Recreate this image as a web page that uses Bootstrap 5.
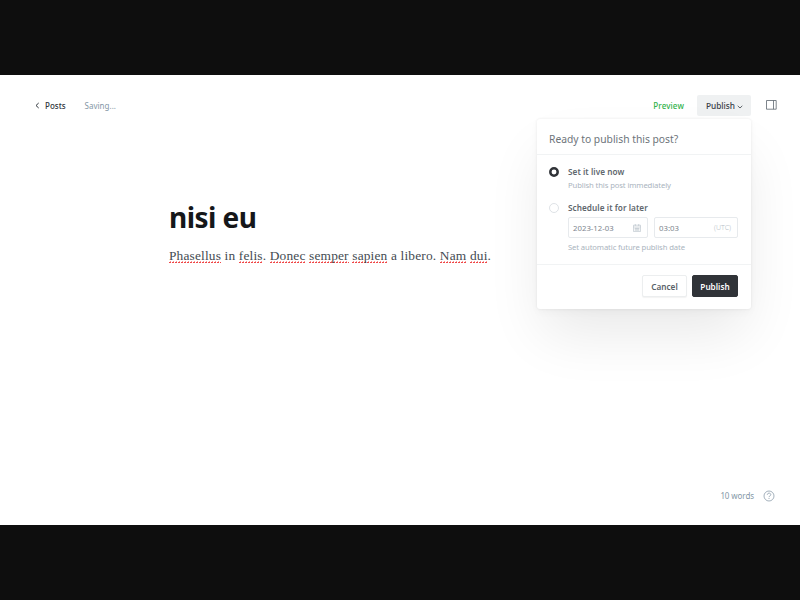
<!DOCTYPE html>
<html lang="en">
<head>
<meta charset="utf-8">
<meta name="viewport" content="width=device-width, initial-scale=1">
<title>Post editor</title>
<link href="https://cdn.jsdelivr.net/npm/bootstrap@5.3.0/dist/css/bootstrap.min.css" rel="stylesheet">
<style>
body{height:600px;overflow:hidden;background:#0e0e0e;font-family:"Noto Sans","Open Sans",sans-serif;font-size:8px;line-height:12px;color:#394047}
svg{display:block;flex:none}
.editor{height:450px;margin-top:75px;background:#fff}
.topbar{height:61px;padding:0 23px 0 34px}
.back{gap:4px;font-weight:500;color:#30363c}
.saving{margin-left:19px;color:#8497a6}
.preview{color:#30b24a;font-weight:500;margin-right:13px;letter-spacing:.12px}
.menu-toggle{width:54px;height:21px;border-radius:2px;background:#eff1f2;font-size:8.3px;font-weight:500;color:#394047;line-height:12px;gap:2px;padding-left:1px}
.menu-toggle svg{margin-top:2px}
.side{margin:-1px 0 0 15px;color:#5d666e}
.publish-menu{top:24px;right:0;width:214px;height:190px;background:#fff;border-radius:3px;box-shadow:0 0 3px rgba(0,0,0,.07),0 3px 8px rgba(0,0,0,.03),0 30px 54px -6px rgba(0,0,0,.09);z-index:5}
.menu-head{height:36px;padding:4px 12px 0;border-bottom:1px solid #f1f3f4;font-size:10.3px;color:#6d747a}
.menu-main{height:109px;padding:11px 13px 0 12px}
.choice{display:grid;grid-template-columns:10px 1fr;column-gap:9px}
.later{margin-top:11px}
.dot{margin-top:1px}
.choice-title{font-size:8.2px;font-weight:600;color:#60676d;letter-spacing:.06px}
.hint{font-size:7.7px;color:#aab4be;font-weight:400;padding-top:1px;letter-spacing:-.12px}
.fields{gap:6px;margin:3px 0 2px}
.field{height:21px;border:1px solid #e7eaed;border-radius:2px;padding:1px 6px 0 4px;color:#7e868e;font-size:7.8px}
.date{width:80px}
.time{width:84px}
.zone{font-size:7px;color:#b3bdc6;font-weight:300}
.menu-foot{border-top:1px solid #f1f3f4;height:45px;padding:0 13px 2px;gap:5px}
.act{height:22px;padding:0;font-size:8.2px;line-height:21px;font-weight:600;border-radius:2px}
.cancel{width:45px;border:1px solid #eceeef;color:#596168;background:#fff;box-shadow:0 1px 1px rgba(0,0,0,.05)}
.go{width:46px;border:1px solid #303338;background:#303338;color:#fff}
.draft{margin-left:169px;padding-top:63px}
.title{font-size:28px;line-height:36px;font-weight:700;color:#15171a;margin:0;letter-spacing:-.55px}
.text{font-family:"Liberation Serif",serif;font-size:13.4px;line-height:20px;color:#444b52;margin:11px 0 0;letter-spacing:.165px}
.typo{background:repeating-linear-gradient(90deg,#f04848 0 2px,transparent 2px 3px) 0 100%/100% 1px no-repeat,repeating-linear-gradient(90deg,transparent 0 1px,#f59a9a 1px 2px,transparent 2px 3px) 0 calc(100% - 1px)/100% 1px no-repeat}
.status{top:415px;right:25px;gap:9px;color:#8497a6;letter-spacing:-.08px}
</style>
</head>
<body>
<main class="editor position-relative">
  <header class="topbar d-flex align-items-center">
    <div class="back d-flex align-items-center"><svg width="7" height="7" viewBox="0 0 7 7" fill="none" stroke="currentColor"><path d="M4.700 1 2 3.500 4.700 6"/></svg><span>Posts</span></div>
    <span class="saving">Saving...</span>
    <span class="preview ms-auto">Preview</span>
    <div class="position-relative">
      <div class="menu-toggle d-flex align-items-center justify-content-center"><span>Publish</span><svg width="6" height="6" viewBox="0 0 6 6" fill="none" stroke="currentColor" stroke-width=".8"><path d="M.7 1.800 3 4l2.300-2.200"/></svg></div>
      <section class="publish-menu position-absolute">
        <div class="menu-head d-flex align-items-center">Ready to publish this post?</div>
        <div class="menu-main">
          <div class="choice">
            <svg class="dot" width="10" height="10" viewBox="0 0 10 10" fill="#fff" stroke="#303338" stroke-width="2.500"><circle cx="5" cy="5" r="3.700"/></svg>
            <div><div class="choice-title">Set it live now</div><div class="hint">Publish this post immediately</div></div>
          </div>
          <div class="choice later">
            <svg class="dot" width="10" height="10" viewBox="0 0 10 10" fill="#fff" stroke="#d5dadf" stroke-width=".8"><circle cx="5" cy="5" r="4.500"/></svg>
            <div>
              <div class="choice-title">Schedule it for later</div>
              <div class="fields d-flex">
                <div class="field date d-flex align-items-center justify-content-between"><span>2023-12-03</span><svg width="8" height="8" viewBox="0 0 8 8" fill="none" stroke="#b6bfc7" stroke-width=".6"><path d="M.5 1.200h7v6.300h-7zM.5 3h7M1.500 4.500h5M1.500 6h5M2.300 0v2M3 3.700v3M5 3.700v3M5.700 0v2"/></svg></div>
                <div class="field time d-flex align-items-center justify-content-between"><span>03:03</span><span class="zone">(UTC)</span></div>
              </div>
              <div class="hint">Set automatic future publish date</div>
            </div>
          </div>
        </div>
        <div class="menu-foot d-flex align-items-center justify-content-end">
          <button class="btn act cancel" type="button">Cancel</button>
          <button class="btn act go" type="button">Publish</button>
        </div>
      </section>
    </div>
    <svg class="side" width="11" height="10" viewBox="0 0 11 10" fill="none" stroke="currentColor" stroke-width=".8"><path d="M.5.5h9.700v8.700H.5zM7.500.5v8.700"/></svg>
  </header>
  <article class="draft">
    <h1 class="title">nisi eu</h1>
    <p class="text"><span class="typo">Phasellus</span> in <span class="typo">felis</span>. <span class="typo">Donec</span> <span class="typo">semper</span> <span class="typo">sapien</span> a libero. <span class="typo">Nam</span> <span class="typo">dui</span>.</p>
  </article>
  <footer class="status position-absolute d-flex align-items-center"><span>10 words</span><svg width="12" height="12" viewBox="0 0 12 12" fill="none" stroke="#8d9dab" stroke-width=".8"><circle cx="6" cy="6" r="5"/><path d="M4.300 4.800c0-2.300 3.500-2.200 3.500-.1C7.800 5.900 6 5.900 6 7.100M6 8v1"/></svg></footer>
</main>
<script src="https://cdn.jsdelivr.net/npm/bootstrap@5.3.0/dist/js/bootstrap.bundle.min.js"></script>
</body>
</html>
